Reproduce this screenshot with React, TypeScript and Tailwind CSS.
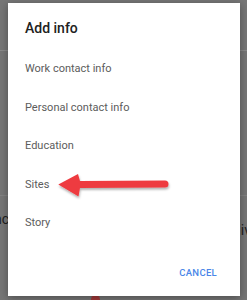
import React from 'react';

const items = ['Work contact info', 'Personal contact info', 'Education', 'Sites', 'Story'];

function Arrow() {
  return (
    <svg className="absolute left-[42px] top-[2px]" width="124" height="34" viewBox="0 0 124 34">
      <defs>
        <filter id="sh" x="-10%" y="-30%" width="120%" height="170%">
          <feDropShadow dx="0.5" dy="2" stdDeviation="1.3" floodColor="#000" floodOpacity="0.3" />
        </filter>
      </defs>
      <path
        filter="url(#sh)"
        d="M8.3 16.5 L28 6 L30 13 L115 12.5 Q118.5 12.5 118.5 16 Q118.5 19.5 115 19.5 L30 20 L28.5 28.5 Z"
        fill="#ee3b40"
      />
    </svg>
  );
}

function Backdrop() {
  return (
    <div className="flex flex-col h-full text-[14px] text-[#1e1e1e]">
      <div className="h-[50px]" />
      <div className="h-px bg-[#8a8a8a]" />
      <div className="h-[144px]" />
      <div className="h-px bg-[#828282]" />
      <div className="flex justify-between items-start pt-[13px]">
        <span className="ml-[-6px]">nc</span>
        <span className="mt-[11px] mr-[-4px]">iv</span>
      </div>
      <div className="flex-1 flex items-end pl-[91px]">
        <div className="w-[9px] h-[5px] rounded-t-full bg-[#a33a3a]" />
      </div>
    </div>
  );
}

export default function App() {
  return (
    <div className="relative w-[247px] h-[300px] overflow-hidden bg-[#767676]" style={{ fontFamily: 'Roboto, "Liberation Sans", sans-serif' }}>
      <Backdrop />
      <div className="absolute left-[8px] top-[3px] w-[232px] h-[293px] bg-white shadow-[0_2px_8px_rgba(0,0,0,0.35)] flex flex-col">
        <h2 className="px-[17px] pt-[15px] text-[14px] font-medium text-[#212121] leading-[20px]">Add info</h2>
        <ul className="mt-[12px] flex flex-col">
          {items.map((t) => (
            <li key={t} className="relative h-[38.5px] px-[17px] flex items-center text-[11px] leading-[16.5px] text-[#5c5c5c]">
              {t}
              {t === 'Sites' && <Arrow />}
            </li>
          ))}
        </ul>
        <div className="mt-auto flex justify-end pr-[23px] pb-[16px]">
          <span className="text-[9.5px] leading-[14px] font-medium tracking-[0.3px] text-[#4a86e8]">CANCEL</span>
        </div>
      </div>
    </div>
  );
}
